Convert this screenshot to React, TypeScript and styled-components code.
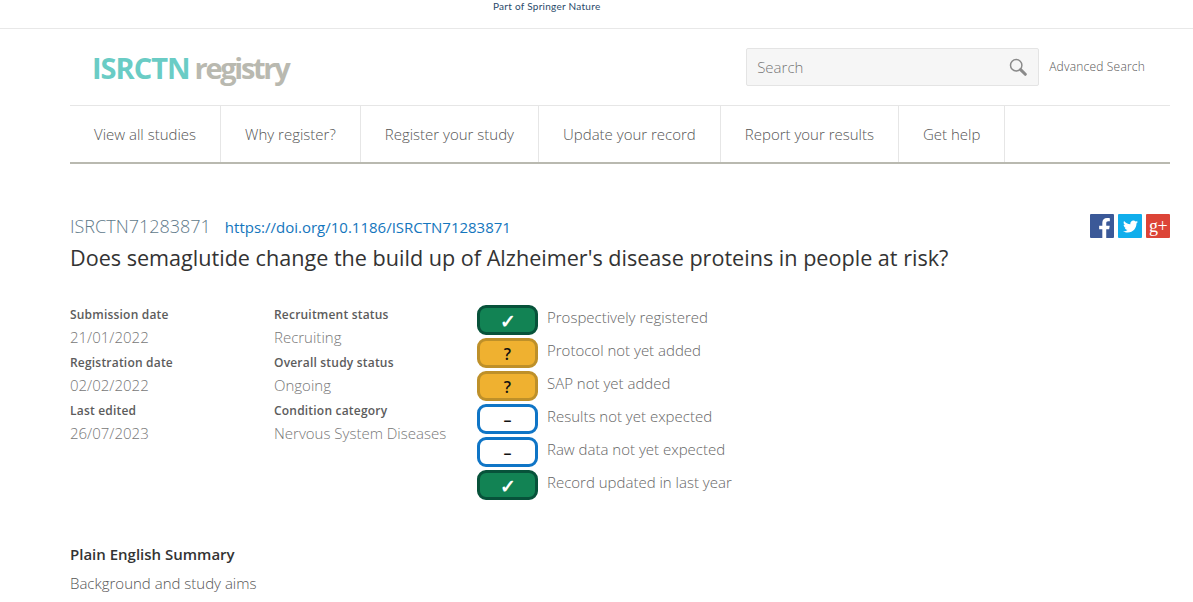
import { FaFacebookF, FaTwitter } from "react-icons/fa";
import styled, { createGlobalStyle } from "styled-components";

const GlobalStyle = createGlobalStyle`
  html, body {
    margin: 0;
    padding: 0;
    height: 602px;
    overflow: hidden;
    background: #fff;
    font-family: "Open Sans", "Liberation Sans", sans-serif;
    color: #333;
  }
`;

const TopStrip = styled.div`
  height: 28px;
  border-bottom: 1px solid #e8e8e8;
  padding-left: 493px;
`;

const SpringerText = styled.span`
  display: block;
  font-family: "Lato", sans-serif;
  font-size: 10px;
  line-height: 12px;
  color: #2a4a6a;
  letter-spacing: 0.27px;
`;

const Container = styled.div`
  width: 1100px;
  margin-left: 70px;
`;

const HeaderRow = styled.header`
  height: 75px;
  display: flex;
  align-items: center;
  justify-content: space-between;
`;

const Logo = styled.div`
  margin-left: 22px;
  margin-top: 2px;
  font-size: 29px;
  font-weight: 700;
  letter-spacing: -1px;
  line-height: 36px;
  display: flex;
  gap: 5px;
`;

const LogoStrong = styled.span`
  color: #6accc5;
`;

const LogoSoft = styled.span`
  color: #b9b9b0;
  font-weight: 700;
  letter-spacing: -2.3px;
`;

const SearchArea = styled.div`
  display: flex;
  align-items: center;
  gap: 10px;
  margin-right: 25px;
`;

const SearchBox = styled.div`
  box-sizing: border-box;
  width: 293px;
  height: 38px;
  padding: 0 11px 0 10px;
  display: flex;
  align-items: center;
  justify-content: space-between;
  background: #f6f6f6;
  border: 1px solid #e4e4e4;
  border-radius: 2px;
  font-size: 15px;
  font-weight: 300;
  color: #777;
`;

const SearchLink = styled.a`
  font-size: 12px;
  font-weight: 300;
  letter-spacing: 0.2px;
  color: #555;
`;

const Nav = styled.nav`
  box-sizing: border-box;
  height: 59px;
  margin-top: 1px;
  display: flex;
  border-top: 1px solid #e6e6e6;
  border-bottom: 2px solid #b9b9b0;
`;

const NavItem = styled.a`
  display: flex;
  align-items: center;
  padding: 0 24px;
  border-right: 1px solid #e6e6e6;
  font-size: 15px;
  font-weight: 300;
  color: #555;
`;

const StudyHead = styled.div`
  margin-top: 49px;
  display: flex;
  justify-content: space-between;
  align-items: flex-start;
`;

const IdLine = styled.div`
  display: flex;
  align-items: baseline;
  gap: 14px;
  line-height: 26px;
`;

const StudyId = styled.span`
  font-size: 18px;
  font-weight: 300;
  color: #5f7a8a;
`;

const Doi = styled.a`
  font-size: 15px;
  color: #1476bd;
`;

const Title = styled.h1`
  margin: 3px 0 0;
  font-size: 21.6px;
  font-weight: 400;
  line-height: 30px;
  color: #333;
`;

const Socials = styled.div`
  display: flex;
  gap: 4px;
  padding-top: 1px;
`;

const Social = styled.a<{ $bg: string }>`
  width: 24px;
  height: 24px;
  border-radius: 1px;
  background: ${(p) => p.$bg};
  color: #fff;
  display: flex;
  align-items: center;
  justify-content: center;
  overflow: hidden;
`;

const FacebookGlyph = styled(FaFacebookF)`
  margin: 4px 0 0 5px;
`;

const GooglePlusGlyph = styled.span`
  font-family: "Liberation Serif", serif;
  font-size: 18px;
  font-weight: 400;
  line-height: 20px;
  letter-spacing: -0.5px;
`;

const Meta = styled.section`
  margin-top: 32px;
  display: flex;
`;

const MetaColumn = styled.div<{ $width: number }>`
  width: ${(p) => p.$width}px;
  padding-top: 1px;
`;

const MetaLabel = styled.div`
  font-size: 12px;
  font-weight: 600;
  letter-spacing: 0.2px;
  line-height: 18px;
  color: #5c5c5c;
`;

const MetaValue = styled.div`
  font-size: 15px;
  font-weight: 300;
  line-height: 26px;
  padding-bottom: 4px;
  color: #777;
`;

const BadgeList = styled.div`
  display: flex;
  flex-direction: column;
  gap: 3px;
`;

const BadgeRow = styled.div`
  display: flex;
  gap: 9px;
  font-size: 15px;
  font-weight: 300;
  line-height: 25px;
  color: #666;
`;

const BADGE_COLORS = {
  yes: { bg: "#128354", border: "#07523a", fg: "#fff", size: 19 },
  unknown: { bg: "#efb130", border: "#be9029", fg: "#111", size: 16 },
  pending: { bg: "#fff", border: "#0f75c6", fg: "#111", size: 16 },
};

type BadgeKind = keyof typeof BADGE_COLORS;

const Badge = styled.span<{ $kind: BadgeKind }>`
  box-sizing: border-box;
  width: 61px;
  height: 30px;
  border: 3px solid ${(p) => BADGE_COLORS[p.$kind].border};
  border-radius: 9px;
  background: ${(p) => BADGE_COLORS[p.$kind].bg};
  color: ${(p) => BADGE_COLORS[p.$kind].fg};
  display: flex;
  align-items: center;
  justify-content: center;
  font-size: ${(p) => BADGE_COLORS[p.$kind].size}px;
  font-weight: 600;
  line-height: 24px;
  padding-top: 2px;
`;

const Summary = styled.section`
  margin-top: 43px;
`;

const SummaryTitle = styled.h2`
  margin: 0;
  font-size: 15px;
  font-weight: 600;
  line-height: 22px;
  color: #333;
`;

const SummarySub = styled.div`
  margin-top: 8px;
  font-size: 15px;
  font-weight: 300;
  line-height: 20px;
  color: #555;
`;

const SummaryText = styled.p`
  margin: 0;
  font-size: 15px;
  font-weight: 300;
  line-height: 28px;
  color: #555;
  white-space: nowrap;
`;

const NAV_ITEMS = [
  "View all studies",
  "Why register?",
  "Register your study",
  "Update your record",
  "Report your results",
  "Get help",
];

const META = [
  {
    width: 204,
    rows: [
      ["Submission date", "21/01/2022"],
      ["Registration date", "02/02/2022"],
      ["Last edited", "26/07/2023"],
    ],
  },
  {
    width: 203,
    rows: [
      ["Recruitment status", "Recruiting"],
      ["Overall study status", "Ongoing"],
      ["Condition category", "Nervous System Diseases"],
    ],
  },
];

const BADGES: { kind: BadgeKind; mark: string; label: string }[] = [
  { kind: "yes", mark: "✓", label: "Prospectively registered" },
  { kind: "unknown", mark: "?", label: "Protocol not yet added" },
  { kind: "unknown", mark: "?", label: "SAP not yet added" },
  { kind: "pending", mark: "–", label: "Results not yet expected" },
  { kind: "pending", mark: "–", label: "Raw data not yet expected" },
  { kind: "yes", mark: "✓", label: "Record updated in last year" },
];

const SearchIcon = () => (
  <svg width="18" height="18" viewBox="0 0 18 18" fill="none">
    <circle cx="7.2" cy="7.2" r="5.7" stroke="#8a8a8a" strokeWidth="1.5" />
    <path d="M11.6 11.6 L16.3 16.3" stroke="#8a8a8a" strokeWidth="3" strokeLinecap="round" />
  </svg>
);

export default function App() {
  return (
    <>
      <GlobalStyle />
      <TopStrip>
        <SpringerText>Part of Springer Nature</SpringerText>
      </TopStrip>
      <Container>
        <HeaderRow>
          <Logo>
            <LogoStrong>ISRCTN</LogoStrong>
            <LogoSoft>registry</LogoSoft>
          </Logo>
          <SearchArea>
            <SearchBox>
              Search
              <SearchIcon />
            </SearchBox>
            <SearchLink>Advanced Search</SearchLink>
          </SearchArea>
        </HeaderRow>
        <Nav>
          {NAV_ITEMS.map((item) => (
            <NavItem key={item}>{item}</NavItem>
          ))}
        </Nav>
        <StudyHead>
          <div>
            <IdLine>
              <StudyId>ISRCTN71283871</StudyId>
              <Doi>https://doi.org/10.1186/ISRCTN71283871</Doi>
            </IdLine>
            <Title>Does semaglutide change the build up of Alzheimer's disease proteins in people at risk?</Title>
          </div>
          <Socials>
            <Social $bg="#3b5998"><FacebookGlyph size={20} /></Social>
            <Social $bg="#10aeec"><FaTwitter size={15} /></Social>
            <Social $bg="#dc4437"><GooglePlusGlyph>g+</GooglePlusGlyph></Social>
          </Socials>
        </StudyHead>
        <Meta>
          {META.map((col) => (
            <MetaColumn key={col.rows[0][0]} $width={col.width}>
              {col.rows.map(([label, value]) => (
                <div key={label}>
                  <MetaLabel>{label}</MetaLabel>
                  <MetaValue>{value}</MetaValue>
                </div>
              ))}
            </MetaColumn>
          ))}
          <BadgeList>
            {BADGES.map((b) => (
              <BadgeRow key={b.label}>
                <Badge $kind={b.kind}>{b.mark}</Badge>
                {b.label}
              </BadgeRow>
            ))}
          </BadgeList>
        </Meta>
        <Summary>
          <SummaryTitle>Plain English Summary</SummaryTitle>
          <SummarySub>Background and study aims</SummarySub>
          <SummaryText>This is the first trial to look at the effects of semaglutide on the build up of Alzheimer's disease proteins in people at risk.</SummaryText>
        </Summary>
      </Container>
    </>
  );
}
